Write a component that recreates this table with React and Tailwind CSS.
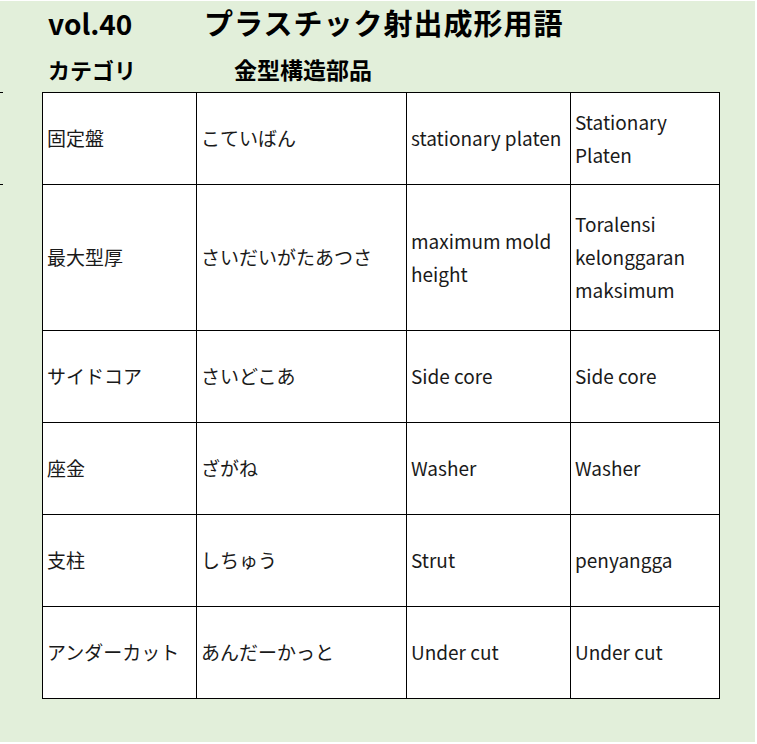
// プラスチック射出成形用語 vol.40 — 金型構造部品の用語表
const rows = [
  { h: 'h-[92px]', ja: '固定盤', kana: 'こていばん', en: 'stationary platen', id: ['Stationary', 'Platen'] },
  { h: 'h-[146px]', ja: '最大型厚', kana: 'さいだいがたあつさ', en: ['maximum mold', 'height'], id: ['Toralensi', 'kelonggaran', 'maksimum'] },
  { h: 'h-[92px]', ja: 'サイドコア', kana: 'さいどこあ', en: 'Side core', id: 'Side core' },
  { h: 'h-[92px]', ja: '座金', kana: 'ざがね', en: 'Washer', id: 'Washer' },
  { h: 'h-[92px]', ja: '支柱', kana: 'しちゅう', en: 'Strut', id: 'penyangga' },
  { h: 'h-[92px]', ja: 'アンダーカット', kana: 'あんだーかっと', en: 'Under cut', id: 'Under cut' },
]

function Cell({ h, children }) {
  const lines = Array.isArray(children) ? children : [children]
  return (
    <div className={`${h} border-r border-b border-black flex flex-col justify-center pl-[4px] pb-[2px] leading-[33px]`}>
      {lines.map((t, i) => <span key={i} className="whitespace-nowrap">{t}</span>)}
    </div>
  )
}

export default function App() {
  return (
    <div className="w-[757px] h-[744px] bg-white pt-px pr-[2px] pb-[2px]">
      <div className="relative h-full bg-[#e2efda] text-black font-['Noto_Sans_CJK_JP','Noto_Sans',sans-serif]">
        {/* 左端の罫線の切れ端 */}
        <div className="absolute left-0 top-[91px] w-[3px] h-px bg-black" />
        <div className="absolute left-0 top-[183px] w-[3px] h-px bg-black" />

        <div className="flex items-center h-[43px] pl-[48px] font-bold">
          <span className="w-[156px] text-[28px]">vol.40</span>
          <span className="text-[29px] tracking-[1px]">プラスチック射出成形用語</span>
        </div>
        <div className="flex items-center h-[48px] pl-[48px] pt-[2px] font-bold">
          <span className="w-[186px] text-[22px]">カテゴリ</span>
          <span className="text-[23px]">金型構造部品</span>
        </div>

        <div className="ml-[42px] w-[678px] grid grid-cols-[154px_210px_164px_149px] border-l border-t border-black bg-white text-[19px] text-[#1a1a1a]">
          {rows.map((r, i) => (
            <div key={i} className="contents">
              <Cell h={r.h}>{r.ja}</Cell>
              <Cell h={r.h}>{r.kana}</Cell>
              <Cell h={r.h}>{r.en}</Cell>
              <Cell h={r.h}>{r.id}</Cell>
            </div>
          ))}
        </div>
      </div>
    </div>
  )
}
